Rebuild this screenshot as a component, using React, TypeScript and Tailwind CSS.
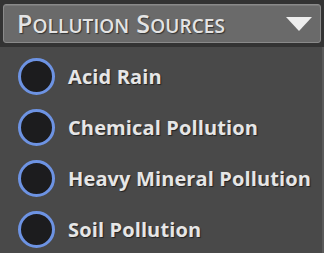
import React from 'react';

const items = ['Acid Rain', 'Chemical Pollution', 'Heavy Mineral Pollution', 'Soil Pollution'];

const SmallCaps: React.FC<{ word: string }> = ({ word }) => (
  <span>
    <span className="text-[25px]">{word[0]}</span>
    <span className="text-[19px]">{word.slice(1).toUpperCase()}</span>
  </span>
);

const App: React.FC = () => {
  return (
    <div className="w-[324px] h-[253px] bg-[#494949] overflow-hidden flex flex-col" style={{ fontFamily: '"Open Sans", sans-serif' }}>
      <div className="bg-[#333333] px-[3px] pt-[4px] pb-[4px]">
        <div className="h-[39px] rounded-[3px] border border-[#8a8a8a] bg-[#6a6a6a] flex items-center justify-between pl-[13px] pr-[8px] shadow-[inset_0_1px_0_#7a7a7a]">
          <span className="flex gap-[7px] items-baseline font-semibold text-[#e4e4e4] [text-shadow:1px_1px_1px_#333] leading-none tracking-[0.1px]">
            <SmallCaps word="Pollution" />
            <SmallCaps word="Sources" />
          </span>
          <svg width="26" height="14" viewBox="0 0 26 14">
            <polygon points="0,0 26,0 13,14" fill="#eeeeee" />
          </svg>
        </div>
      </div>
      <div className="flex-1 flex flex-col pt-[4px] border-r-2 border-[#5a5a5a]">
        {items.map((label) => (
          <div key={label} className="h-[51px] flex items-center gap-[13px] pl-[18px]">
            <div className="w-[37px] h-[37px] rounded-full bg-[#1c1c1e] border-[3px] border-[#6d93e3] shrink-0" />
            <span className="text-[20px] font-bold tracking-[0.13px] text-[#e6e6e6] [text-shadow:1px_1px_1px_#222]">{label}</span>
          </div>
        ))}
      </div>
    </div>
  );
};

export default App;
